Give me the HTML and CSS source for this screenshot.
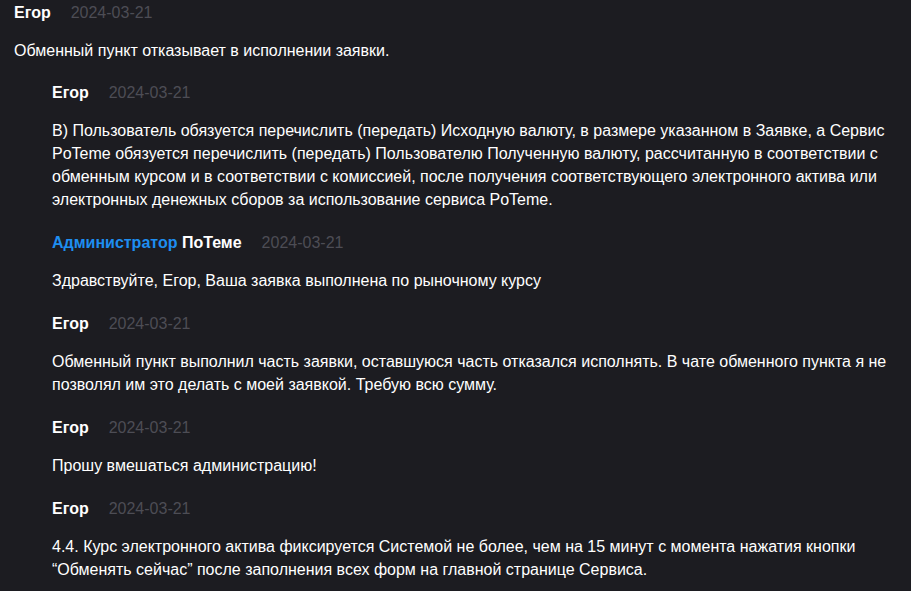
FILE: index.html
```html
<!DOCTYPE html>
<html lang="ru">
<head>
    <meta charset="UTF-8">
    <meta name="viewport" content="width=device-width, initial-scale=1.0">
    <title>Комментарии</title>
    <link rel="stylesheet" href="styles.css">
</head>
<body>
    <div class="comments">
        <div class="comment">
            <div class="comment-head">
                <span class="author">Егор</span>
                <span class="date">2024-03-21</span>
            </div>
            <p class="text">Обменный пункт отказывает в исполнении заявки.</p>

            <div class="replies">
                <div class="comment">
                    <div class="comment-head">
                        <span class="author">Егор</span>
                        <span class="date">2024-03-21</span>
                    </div>
                    <p class="text">В) Пользователь обязуется перечислить (передать) Исходную валюту, в размере указанном в Заявке, а Сервис PoTeme обязуется перечислить (передать) Пользователю Полученную валюту, рассчитанную в соответствии с обменным курсом и в соответствии с комиссией, после получения соответствующего электронного актива или электронных денежных сборов за использование сервиса PoTeme.</p>
                </div>

                <div class="comment">
                    <div class="comment-head">
                        <span class="author"><span class="role">Администратор</span> ПоТеме</span>
                        <span class="date">2024-03-21</span>
                    </div>
                    <p class="text">Здравствуйте, Егор, Ваша заявка выполнена по рыночному курсу</p>
                </div>

                <div class="comment">
                    <div class="comment-head">
                        <span class="author">Егор</span>
                        <span class="date">2024-03-21</span>
                    </div>
                    <p class="text">Обменный пункт выполнил часть заявки, оставшуюся часть отказался исполнять. В чате обменного пункта я не позволял им это делать с моей заявкой. Требую всю сумму.</p>
                </div>

                <div class="comment">
                    <div class="comment-head">
                        <span class="author">Егор</span>
                        <span class="date">2024-03-21</span>
                    </div>
                    <p class="text">Прошу вмешаться администрацию!</p>
                </div>

                <div class="comment">
                    <div class="comment-head">
                        <span class="author">Егор</span>
                        <span class="date">2024-03-21</span>
                    </div>
                    <p class="text">4.4. Курс электронного актива фиксируется Системой не более, чем на 15 минут с момента нажатия кнопки “Обменять сейчас” после заполнения всех форм на главной странице Сервиса.</p>
                </div>
            </div>
        </div>
    </div>
</body>
</html>
```

FILE: styles.css
```css
body {
    margin: 0;
    background: #1c1c21;
    color: #ffffff;
    font-family: "Liberation Sans", Arial, sans-serif;
    font-size: 16px;
}

.comments {
    padding: 3px 14px 0 14px;
}

.comment {
    display: flex;
    flex-direction: column;
}

.comment-head {
    display: flex;
    align-items: center;
    gap: 20px;
    height: 20px;
    line-height: 20px;
}

.author {
    font-weight: bold;
}

.role {
    color: #1e8ef0;
}

.date {
    color: #4d4d55;
}

.text {
    margin: 16px 0 0 0;
    line-height: 23px;
}

.replies {
    display: flex;
    flex-direction: column;
    gap: 22px;
    margin-top: 21px;
    padding-left: 38px;
}
```
